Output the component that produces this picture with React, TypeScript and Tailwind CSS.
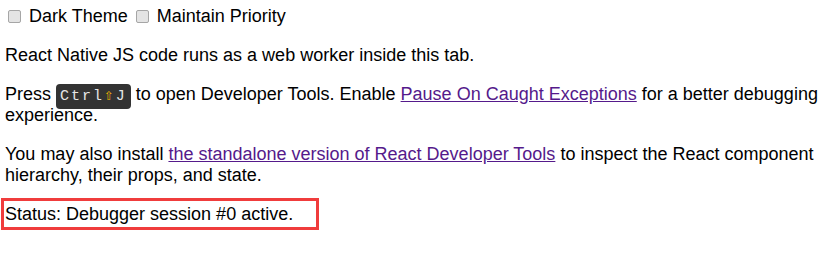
export default function App() {
  return (
    <div className="min-h-[253px] bg-white px-[5px] pt-[6px] font-['Liberation_Sans',Arial,sans-serif] text-[18px] leading-[normal] text-black">
      <div>
        <label>
          <input
            type="checkbox"
            className="ml-[3px] mr-[3px] h-[13px] w-[13px] appearance-none rounded-[2px] border border-[#a6a6a6] bg-[#e4e4e4] align-[-1px]"
          />{" "}
          Dark Theme
        </label>{" "}
        <label>
          <input
            type="checkbox"
            className="ml-[3px] mr-[3px] h-[13px] w-[13px] appearance-none rounded-[2px] border border-[#a6a6a6] bg-[#e4e4e4] align-[-1px]"
          />{" "}
          Maintain Priority
        </label>
      </div>

      <p className="mt-[18px]">React Native JS code runs as a web worker inside this tab.</p>

      <p className="mt-[18px]">
        Press{" "}
        <kbd className="rounded-[4px] bg-[#333] px-[4px] py-[4px] font-['Liberation_Mono',monospace] text-[15px] font-normal tracking-[2px] text-[#e6e6e6]">
          Ctrl<span className="text-[16px] leading-none text-[#f2b600]">⇧</span>J
        </kbd>{" "}
        to open Developer Tools. Enable{" "}
        <a href="#" className="text-[#551a8b] underline">
          Pause On Caught Exceptions
        </a>{" "}
        for a better debugging experience.
      </p>

      <p className="mt-[18px]">
        You may also install{" "}
        <a href="#" className="text-[#551a8b] underline">
          the standalone version of React Developer Tools
        </a>{" "}
        to inspect the React component hierarchy, their props, and state.
      </p>

      <p className="-ml-[4px] mt-[12px] w-fit border-[3px] border-[#f03c3c] pb-[2px] pl-[1px] pr-[23px] pt-[3px]">
        Status: <span>Debugger session #0 active.</span>
      </p>
    </div>
  );
}
